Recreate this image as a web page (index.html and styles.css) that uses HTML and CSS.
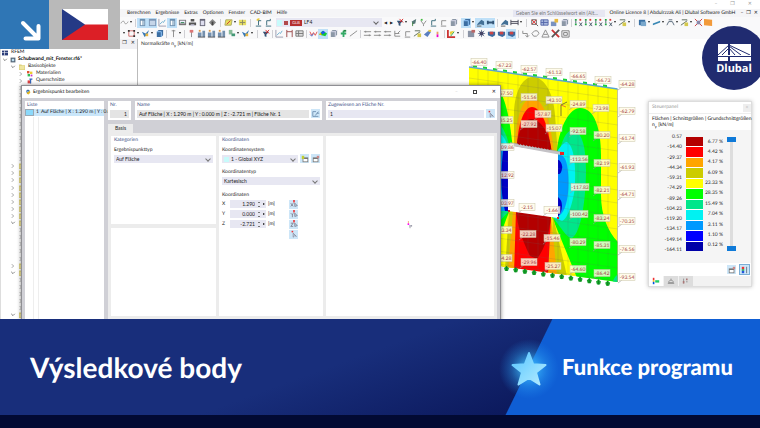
FILE: index.html
```html
<!DOCTYPE html>
<html lang="de">
<head>
<meta charset="utf-8">
<title>Výsledkové body</title>
<link rel="stylesheet" href="styles.css">
</head>
<body>
<main class="stage">
  <div class="app">
    <div class="app-title"><span>–</span><span>❐</span><span>✕</span></div>
    <nav class="menubar">
      <a href="#">Berechnen</a><a href="#">Ergebnisse</a><a href="#">Extras</a><a href="#">Optionen</a><a href="#">Fenster</a><a href="#">CAD-BIM</a><a href="#">Hilfe</a>
      <input class="search" type="text" aria-label="Suche" placeholder="Geben Sie ein Schlüsselwort ein (Alt...">
      <span class="licence">Online Licence 8 | Abdulrzzak Ali | Dlubal Software GmbH</span>
      <span class="mdi"><span>–</span><span>❐</span><span>✕</span></span>
    </nav>
    <div class="toolbar" id="bar-top"></div>
    <div class="toolbar" id="bar-bottom"></div>
    <div class="workspace">
      <aside class="sidebar">
        <div class="sidebar-head"><span>❐</span><span>✕</span></div>
        <ul class="tree" id="tree"></ul>
      </aside>
      <section class="viewport">
        <p>Normalkräfte n<sub>y</sub> [kN/m]</p>
        <svg class="model" id="model" viewBox="465 50 185 245"></svg>
      </section>
    </div>
  </div>

  <form class="dialog">
    <header class="dialog-title">
      <svg class="ico" viewBox="0 0 10 10"><path d="M2 3 5 1l3 2-1 3-4 1z" fill="#2d5f9e"/><path d="M4 5 8 3l1 3-3 3-3-1z" fill="#e3b722"/><path d="M3 3h3v2H3z" fill="#7db5dd"/></svg>
      <span>Ergebnispunkt bearbeiten</span>
      <span class="window-keys"><i class="faint">–</i><i class="square"></i><i>✕</i></span>
    </header>
    <div class="dialog-body">
      <section class="panel list">
        <h2>Liste</h2>
        <div class="list-row compact"><i class="swatch"></i><span>1</span><span>Auf Fläche | X : 1.290 m | Y : 0.00</span></div>
        <div class="list-lines"></div>
      </section>
      <div class="detail">
        <div class="heads">
          <section class="panel"><h2><label for="nr">Nr.</label></h2><input class="locked num" id="nr" value="1" readonly></section>
          <section class="panel"><h2><label for="name">Name</label></h2>
            <div class="line"><input class="locked compact" id="name" value="Auf Fläche | X : 1.290 m | Y : 0.000 m | Z : -2.721 m | Fläche Nr. 1" readonly><button type="button" class="key" data-icon="edit" aria-label="Name bearbeiten"></button></div></section>
          <section class="panel"><h2><label for="surface">Zugewiesen an Fläche Nr.</label></h2>
            <div class="line"><input id="surface" value="1"><button type="button" class="key" data-icon="pick" aria-label="Fläche wählen"></button></div></section>
        </div>
        <div class="tabs"><button type="button" class="tab">Basis</button></div>
        <div class="page">
          <div class="stack">
            <section class="card">
              <h2>Kategorien</h2>
              <label for="kind">Ergebnispunkttyp</label>
              <span class="pickbox"><select id="kind"><option>Auf Fläche</option></select></span>
            </section>
            <section class="card"></section>
          </div>
          <section class="card">
            <h2>Koordinaten</h2>
            <label for="system">Koordinatensystem</label>
            <div class="line"><span class="pickbox tinted"><select id="system"><option>1 - Global XYZ</option></select></span><button type="button" class="key" data-icon="fresh" aria-label="Neu"></button><button type="button" class="key" data-icon="props" aria-label="Bearbeiten"></button></div>
            <label for="ctype">Koordinatentyp</label>
            <span class="pickbox"><select id="ctype"><option>Kartesisch</option></select></span>
            <h3>Koordinaten</h3>
            <div class="coord"><label for="cx">X</label><span class="spin"><input class="num" id="cx" value="1.290"><i class="updown"></i><i class="next"></i></span><span>[m]</span><button type="button" class="key" data-icon="pickx" aria-label="X wählen"></button></div>
            <div class="coord"><label for="cy">Y</label><span class="spin"><input class="num" id="cy" value="0.000"><i class="updown"></i><i class="next"></i></span><span>[m]</span><button type="button" class="key" data-icon="picky" aria-label="Y wählen"></button></div>
            <div class="coord"><label for="cz">Z</label><span class="spin"><input class="num" id="cz" value="-2.721"><i class="updown"></i><i class="next"></i></span><span>[m]</span><button type="button" class="key" data-icon="pickz" aria-label="Z wählen"></button></div>
            <div class="coord"><button type="button" class="key" data-icon="pick" aria-label="Punkt wählen"></button></div>
          </section>
          <section class="card preview">
            <svg class="marker" viewBox="0 0 10 10"><path d="M3 0v4" stroke="#f3a06a"/><path d="M2 3h2v2H2z" fill="#f0f"/><path d="M4 6h3M5 6v3M7 5v2" stroke="#889" stroke-width="1" fill="none"/></svg>
          </section>
        </div>
      </div>
    </div>
  </form>

  <aside class="control">
    <header><span>Steuerpanel</span><button type="button" aria-label="Schließen">×</button></header>
    <p class="compact">Flächen | Schnittgrößen | Grundschnittgrößen<br>n<sub>y</sub> [kN/m]</p>
    <div class="scale">
      <ol class="bounds"><li>0.57</li><li>-14.40</li><li>-29.37</li><li>-44.34</li><li>-59.31</li><li>-74.29</li><li>-89.26</li><li>-104.23</li><li>-119.20</li><li>-134.17</li><li>-149.14</li><li>-164.11</li></ol>
      <div class="bands"><i class="b1"></i><i class="b2"></i><i class="b3"></i><i class="b4"></i><i class="b5"></i><i class="b6"></i><i class="b7"></i><i class="b8"></i><i class="b9"></i><i class="b10"></i><i class="b11"></i></div>
      <ol class="shares"><li>6.77 %</li><li>4.42 %</li><li>4.17 %</li><li>6.09 %</li><li>23.33 %</li><li>28.35 %</li><li>15.49 %</li><li>7.04 %</li><li>3.11 %</li><li>1.10 %</li><li>0.12 %</li></ol>
      <div class="range"><input type="range" min="0" max="100" value="100" aria-label="Obergrenze"><input type="range" min="0" max="100" value="0" aria-label="Untergrenze"></div>
    </div>
    <div class="control-keys"><button type="button" class="key" data-icon="props" aria-label="Optionen"></button><button type="button" class="key framed" data-icon="legend" aria-label="Legende"></button></div>
    <div class="control-tabs"><button type="button" class="on" data-icon="bands" aria-label="Farbskala"></button><button type="button" data-icon="weight" aria-label="Faktoren"></button><button type="button" data-icon="nodes" aria-label="Filter"></button></div>
  </aside>

  <div class="corner">
    <div class="corner-arrow"><svg viewBox="0 0 49 49"><path d="M23 23 38 38M38.500 26V38.500H25.500" fill="none" stroke="#fff" stroke-width="4" stroke-linecap="round" stroke-linejoin="round"/></svg></div>
    <div class="corner-flag"><svg viewBox="0 0 46 31"><path d="M0 0h46v16H0z" fill="#fff"/><path d="M0 15.500h46V31H0z" fill="#dc1f26"/><path d="M0 0 23 15.500 0 31z" fill="#253a86"/></svg></div>
  </div>

  <div class="logo">
    <svg viewBox="0 0 33 17"><path d="M0 0h33v12H0zM0 13h33v4H0z" fill="#fff"/><path d="M0 11 11 1 32 11M4 11 11 4M11 2 23 11M11 4 17 11" fill="none" stroke="#202b70" stroke-width="1"/><path d="M10 0h2v17h-2z" fill="#202b70"/><path d="M0 11h33v1H0z" fill="#fff"/></svg>
    <strong>Dlubal</strong>
  </div>
</main>

<section class="banner">
  <h1>Výsledkové body</h1>
  <div class="feature">
    <svg class="star" viewBox="0 0 60 60">
      <defs>
        <radialGradient id="glow"><stop offset=".2" stop-color="#3fc0ff" stop-opacity=".8"/><stop offset=".6" stop-color="#2fa6f5" stop-opacity=".35"/><stop offset="1" stop-color="#1f8df0" stop-opacity="0"/></radialGradient>
        <linearGradient id="ice" x1="0" y1="0" x2="1" y2="1"><stop offset="0" stop-color="#58c4ff"/><stop offset=".5" stop-color="#86d9ff"/><stop offset="1" stop-color="#b4ebff"/></linearGradient>
      </defs>
      <circle cx="30" cy="30" r="30" fill="url(#glow)"/>
      <path d="M30 14l4.200 11.300L46.500 26 37 33.500 40.500 45.500 30 38.800 19.500 45.500 23 33.500 13.500 26l12.300-.7z" fill="url(#ice)" stroke="url(#ice)" stroke-width="2" stroke-linejoin="round"/>
    </svg>
    <strong>Funkce programu</strong>
  </div>
</section>
<footer class="base"></footer>
<script src="app.js"></script>
</body>
</html>
```

FILE: styles.css
```css
* { box-sizing: border-box; }

body {
  margin: 0;
  min-height: 100vh;
  display: grid;
  grid-template-rows: 1fr 96px 13px;
  font: 5px/7px Lato, "Open Sans", sans-serif;
  color: #222;
  text-rendering: geometricPrecision;
}

h1, h2, h3, p, ol, ul { margin: 0; padding: 0; list-style: none; }
button, input, select { font: inherit; color: inherit; margin: 0; padding: 0; border: 0; background: none; border-radius: 0; min-width: 0; }
a { color: inherit; text-decoration: none; }
i { font-style: normal; }
svg { display: block; }
sub { font-size: 4px; line-height: 1px; }
.compact { font-family: "Liberation Sans Narrow", Lato, sans-serif; color: #111; }

.stage { position: relative; overflow: hidden; background: #fff; }
.app { position: absolute; inset: 0; display: flex; flex-direction: column; }

.app-title { height: 9px; display: flex; justify-content: flex-end; gap: 13px; padding: 1px 8px 0 0; color: #999; }
.menubar { height: 8px; display: flex; align-items: center; gap: 5px; padding-left: 127px; padding-right: 2px; background: #f5f5f7; white-space: nowrap; }
.search { margin-left: auto; width: 92px; height: 7px; padding-left: 3px; background: #e7e7f2; }
.search::placeholder { color: #777; opacity: 1; }
.mdi { display: flex; gap: 3px; }

.toolbar { height: 11px; display: flex; align-items: center; padding-left: 119px; background: #f9f9fa; }
.tool { flex: none; width: 10px; height: 10px; display: grid; place-items: center; }
.tool svg { width: 9px; height: 9px; }
.tool.on { background: #bfe0f8; }
.drop { flex: none; width: 4px; display: grid; place-items: center; }
.drop::after { content: ""; border: 1px solid transparent; border-top: 2px solid #222; }
.sep { flex: none; width: 6px; height: 8px; background: linear-gradient(#d0d0d4, #d0d0d4) center / 1px 100% no-repeat; }
.sep.thin { width: 4px; }
.gap { flex: none; width: 3px; }
.loadcase { flex: none; width: 106px; height: 9px; display: flex; align-items: center; gap: 2px; padding-left: 1px; background: #e7e7f2; }
.loadcase .cyan { width: 5px; height: 6px; background: #c8fbfb; }
.loadcase .red { width: 4px; height: 4px; background: #b04a4a; }
.loadcase .code { width: 12px; height: 6px; font-size: 4px; line-height: 6px; text-align: center; color: #fff; background: #b5302f; }
.loadcase select { flex: 1; appearance: none; }
.chev::after { content: ""; display: block; width: 3px; height: 3px; margin: 0 4px 2px 0; border: solid #666; border-width: 0 1px 1px 0; transform: rotate(45deg); }
.step { flex: none; width: 6px; text-align: center; font-size: 4px; }

.workspace { flex: 1; min-height: 0; display: flex; }
.sidebar { flex: none; width: 138px; display: flex; flex-direction: column; border-left: 1px solid #ddd; border-right: 1px solid #bbb; }
.sidebar-head { height: 10px; display: flex; justify-content: flex-end; gap: 4px; padding: 1px 2px 0 0; background: #f0f0f4; }
.tree { flex: 1; min-height: 0; display: grid; grid-auto-rows: 1fr; white-space: nowrap; }
.tree li { display: flex; align-items: center; gap: 3px; min-height: 0; }
.tree svg { width: 6px; height: 6px; flex: none; }
.tree .d0 { padding-left: 1px; }
.tree .d1 { padding-left: 1px; }
.tree .d2 { padding-left: 9px; }
.tree .d3 { padding-left: 17px; }
.tree .d1 { gap: 2px; font-weight: 700; color: #000; }

.viewport { flex: 1; position: relative; padding: 2px 3px; }
.model { position: absolute; left: 327px; top: 11px; width: 185px; height: 245px; }
.model text { font-size: 5px; fill: #a33838; text-anchor: middle; }

.dialog { position: absolute; left: 21px; right: 259px; top: 85px; bottom: -12px; display: flex; flex-direction: column; border: 1px solid #8f8f94; background: #d0d0d6; box-shadow: 0 0 4px rgba(0, 0, 0, .45); }
.dialog-title { height: 12px; display: flex; align-items: center; gap: 2px; padding: 0 4px 0 3px; background: #fff; color: #111; }
.ico { width: 6px; height: 6px; }
.window-keys { margin-left: auto; display: flex; align-items: center; gap: 15px; }
.window-keys .faint { color: #ccc; }
.square { width: 4px; height: 4px; border: 1px solid #444; }
.dialog-body { flex: 1; min-height: 0; display: flex; gap: 4px; padding: 3px 3px 0; }
.panel, .card { background: #fff; min-width: 0; }
.panel h2, .card h2 { font-size: 5px; line-height: 7px; font-weight: 400; color: #3c4f86; }

.list { width: 79px; flex: none; display: flex; flex-direction: column; }
.list h2 { padding: 1px 2px 0; }
.list-row { height: 7px; display: flex; align-items: center; gap: 2px; background: #c9e6fa; white-space: nowrap; }
.list-row span { flex: none; }
.swatch { flex: none; width: 9px; height: 7px; background: #8bd9fb; border: 1px solid #9aa9b5; }
.list-lines { flex: 1; width: 6px; margin: 1px 0 0 8px; border: solid #eee; border-width: 0 1px; }

.detail { flex: 1; min-width: 0; display: flex; flex-direction: column; }
.heads { display: grid; grid-template-columns: 23px 187px 1fr; gap: 4px; }
.heads .panel { height: 19px; padding: 1px 2px; }
.heads input { width: 100%; height: 8px; margin-top: 1px; padding: 0 2px; background: #e7e7f2; }
.heads .locked { background: #e4e4e4; }
.num, .heads .num { text-align: right; }
.line { display: flex; align-items: center; gap: 2px; }
.line input, .line .pickbox { flex: 1; }
.key { flex: none; width: 9px; height: 9px; display: grid; place-items: center; background: #cde6f8; }
.key svg { width: 8px; height: 8px; }
.framed { outline: 1px solid #7aaed6; }

.tabs { height: 13px; display: flex; align-items: flex-end; }
.tab { width: 25px; height: 9px; background: #ececec; }
.page { flex: 1; min-height: 0; display: grid; grid-template-columns: 105px 104px 1fr; gap: 3px; padding: 3px 3px 14px; background: #ececec; }
.stack { display: grid; grid-template-rows: 1fr 1fr; gap: 4px; }
.card { padding: 1px 3px; display: flex; flex-direction: column; }
.card > label { margin-top: 3px; }
.card h3 { font-size: 5px; line-height: 7px; font-weight: 400; margin: 7px 0 0; }
.card .line + label { margin-top: 6px; }
.pickbox { display: block; position: relative; height: 8px; margin-top: 1px; background: #e7e7f2; }
.pickbox::after { content: ""; position: absolute; right: 3px; top: 2px; width: 3px; height: 3px; border: solid #777; border-width: 0 1px 1px 0; transform: rotate(45deg); }
.pickbox select { display: block; width: 100%; height: 8px; padding-left: 2px; appearance: none; }
.tinted::before { content: ""; position: absolute; left: 2px; top: 2px; width: 5px; height: 5px; background: #c8fbfb; }
.tinted select { padding-left: 9px; }
.coord { display: flex; align-items: center; height: 10px; gap: 2px; }
.coord label { width: 6px; }
.spin { width: 36px; height: 8px; display: flex; align-items: center; gap: 3px; background: #e7e7f2; }
.spin input { width: 25px; height: 8px; }
.updown { width: 2px; height: 5px; border: solid #777; border-width: 1px 0; }
.next { border: 1px solid transparent; border-left: 2px solid #111; border-right: 0; }
.coord .key { margin-left: auto; margin-right: 22px; }
.preview { display: grid; place-items: center; padding-bottom: 4px; }
.marker { width: 8px; height: 8px; }

.control { position: absolute; right: 8px; top: 101px; width: 104px; display: flex; flex-direction: column; background: #fff; border: 1px solid #ddd; box-shadow: 0 0 4px rgba(0, 0, 0, .25); }
.control header { height: 11px; display: flex; align-items: center; justify-content: space-between; padding-left: 3px; color: #999; }
.control header button { width: 8px; height: 8px; line-height: 7px; background: #eee; color: #bbb; }
.control p { height: 17px; padding: 2px 3px 0; line-height: 6px; white-space: nowrap; border-top: 1px solid #eee; }
.scale { height: 133px; display: flex; padding: 7px 15px 12px 0; background: #f5f5f5; text-align: right; }
.bounds { width: 33px; display: flex; flex-direction: column; justify-content: space-between; margin: -3px 0; }
.bounds li, .shares li { line-height: 7px; }
.bands { width: 17px; margin-left: 4px; display: grid; gap: 1px; background: #fff; }
.shares { width: 20px; display: grid; align-items: center; }
.range { margin-left: auto; width: 10px; display: flex; flex-direction: column; background: linear-gradient(#ddd, #ddd) center / 3px 100% no-repeat; }
.range input { flex: 1; min-height: 0; width: 10px; writing-mode: vertical-lr; direction: rtl; appearance: none; }
.range input::-webkit-slider-thumb { appearance: none; width: 9px; height: 5px; background: #0f7ad8; }
.range input::-webkit-slider-runnable-track { background: none; }
.b1 { background: #b30000; }
.b2 { background: #f00; }
.b3 { background: #ffa500; }
.b4 { background: #cccc00; }
.b5 { background: #ff0; }
.b6 { background: #0f0; }
.b7 { background: #00e68a; }
.b8 { background: #00f2f2; }
.b9 { background: #0099ff; }
.b10 { background: #00f; }
.b11 { background: #0000a8; }
.control-keys { height: 13px; display: flex; justify-content: flex-end; align-items: center; gap: 4px; padding-right: 2px; }
.control-tabs { height: 10px; display: flex; background: #f2f2f2; }
.control-tabs button { width: 15px; display: grid; place-items: center; background: #ddd; border-right: 1px solid #f2f2f2; }
.control-tabs .on { background: #fff; }
.control-tabs svg { width: 8px; height: 8px; }

.corner { position: absolute; left: 0; top: 0; height: 49px; display: flex; }
.corner-arrow { width: 49px; background: #2f76b5; }
.corner-flag { width: 71px; display: grid; place-items: center; background: #b9b9b9; }
.corner-flag svg { width: 46px; height: 31px; }

.logo { position: absolute; right: -6px; top: 26px; width: 64px; height: 64px; display: flex; flex-direction: column; align-items: center; padding-top: 18px; border-radius: 50%; background: #202b70; color: #fff; }
.logo svg { width: 33px; height: 17px; }
.logo strong { font: 700 11px/15px "Open Sans", sans-serif; }

.banner { display: flex; justify-content: space-between; align-items: center; padding-left: 30px; background: linear-gradient(160deg, #182e7b 45%, #0a1658 80%, #0e1c62); color: #fff; }
.banner h1 { font: 700 28px/40px Lato, sans-serif; }
.feature { align-self: stretch; width: 256px; display: flex; align-items: center; background: linear-gradient(116deg, transparent 43px, #0f5ed4 44px); }
.star { width: 60px; height: 60px; margin: 4px 3px 0 -5px; flex: none; }
.feature strong { font: 900 22px/30px Lato, sans-serif; white-space: nowrap; }
.base { background: #020a33; }
```

FILE: app.js
```js
const line = (d, color, width = 1) => `<path d="${d}" fill="none" stroke="${color}" stroke-width="${width}"/>`;
const fill = (d, color) => `<path d="${d}" fill="${color}"/>`;

const icons = {
  undo: line("M1 6C2 3 5 3 5 5S8 7 9 4", "#999"),
  win: fill("M2 1h6v8H2z", "#6d8fae") + fill("M3 3h2v5H3z", "#fff") + fill("M6 3h1v5H6z", "#dbe9f4"),
  table: fill("M1 1h8v8H1z", "#7b95b5") + fill("M2 3h6v5H2z", "#c5d5e8"),
  graph: line("M1 1v8h8", "#99a") + line("M2 7l3-3 1 1 2-3", "#6ac"),
  calc: fill("M1 2h8v6H1z", "#777") + fill("M2 3h6v3H2z", "#eef") + line("M3 5h4", "#385"),
  print: fill("M1 5h8v3H1zM3 1h4v3H3z", "#555") + fill("M3 7h4v2H3z", "#ccd"),
  doc: fill("M2 1h6v8H2z", "#667") + fill("M3 3h4v5H3z", "#dde"),
  fan: fill("M5 1l4 4-4 4-4-4z", "#888") + fill("M4 4h2v4H4z", "#444"),
  hatch: fill("M2 2h7L8 8H1z", "#e8e05a") + line("M2 2h7L8 8H1z", "#aa6") + line("M3 7l4-4", "#c33"),
  plan: fill("M1 2h8v6H1z", "#e4dc62") + line("M2 5h6M5 2v6", "#886"),
  load: fill("M3 1l3-1v3H3z", "#e8c93c") + line("M2 9h6M5 8V3h3", "#367"),
  load2: line("M2 9h6M3 8V3h4V1", "#367"),
  filter: fill("M2 3h7L6 6v3L4 8V6z", "#357") + line("M5 1l4 4M9 1 5 5", "#d22"),
  leaf: fill("M3 4l5-3-1 5-3 1z", "#577") + line("M4 5v4", "#484"),
  tick: line("M2 3l3 4 3-4M5 7v2", "#888") + fill("M2 1h2v2H2z", "#4b4"),
  frame: line("M2 9h6M3 8V3h5", "#888"),
  cube: fill("M2 3l2-2h5v5L7 9H2z", "#8b97a6") + line("M2 3h5v6M7 3l2-2", "#dde"),
  bluecube: fill("M2 3l2-2h5v6L7 9H2z", "#3c6ea2") + line("M2 3h5v6", "#9cf"),
  beam: fill("M2 6l4-4 3 2v4L5 7 1 8z", "#447096") + line("M1 9h5", "#555"),
  dims: line("M1 5h8M2 3v4M8 3v4", "#357", 2),
  span: line("M1 2v6M9 2v6M1 4h8M1 6h8", "#445"),
  zoomx: line("M2 2h5v5H2zM7 7l2 2", "#555") + line("M2 2l5 5M7 2 2 7", "#d33"),
  box: fill("M1 2h8v6H1z", "#aab9dd") + line("M1 2h8v6H1zM4 2v6M1 5h8", "#56a"),
  ybox: fill("M1 4h6v5H1z", "#7a92c0") + fill("M5 1h4v4H5z", "#e8b93c"),
  axes: fill("M1 1h2v2H1zM1 6h2v2H1z", "#2a4") + fill("M6 1h2v2H6z", "#d33") + line("M6 5l3 4M9 5 6 9M2 3v3", "#456"),
  slope: line("M1 8l7-5M2 2h6", "#565") + fill("M5 5h4v4H5z", "#d5c94d"),
  db: fill("M1 2h7v6H1z", "#3870a4") + fill("M3 4h6v5H3z", "#79a7cb"),
  bar: fill("M1 6l8-3v2L1 8z", "#3a88b5"),
  tri: line("M1 8l2-4h4l2 4M3 2h4", "#567"),
  redx: line("M1 1l8 8M9 1 1 9", "#c33") + fill("M3 3h4v4H3z", "#88a"),
  orange: fill("M0 1l9 1v7L0 8z", "#f29a3a"),
  square: line("M2 2h6v6H2z", "#c66") + fill("M1 1h2v2H1zM7 7h2v2H7zM7 1h2v2H7z", "#333"),
  bolt: fill("M1 3l4 2 4-4-2 5-3 3z", "#3578b8") + fill("M5 5h3v3H5z", "#e7b540"),
  pin: line("M5 1v8M3 2h4", "#888"),
  pinr: line("M5 3v6", "#888") + fill("M3 1h4v3H3z", "#d77"),
  build: fill("M1 4h4v5H1zM6 2h3v7H6z", "#7490ae") + fill("M2 1h2v2H2z", "#d94") + line("M1 9h8", "#555"),
  green: fill("M2 1h4v5H2z", "#8b9") + fill("M5 5h4v3H5z", "#497"),
  arch: line("M2 9V3h6v6M2 3V1M8 3V1", "#944"),
  grid: fill("M1 2h8v6H1z", "#ddd") + line("M1 2h8v6H1zM1 5h8M4 2v6", "#777"),
  vee: line("M1 3l2 4 2-3 2 3 2-4", "#d44") + line("M1 6l2 2 2-3", "#46c"),
  surf: fill("M0 6l4-4 5 3-2 3z", "#1c3") + fill("M2 4l3-2 2 2-3 2z", "#25e") + fill("M0 6l2-2 1 3z", "#fb0"),
  shaft: line("M5 2v7M2 5h6", "#3a6", 2) + fill("M5 1h3v2H5z", "#284"),
  diag: line("M1 8l8-6", "#888"),
  rule: line("M1 3h8M1 7h8M3 2v2M7 6v2", "#888"),
  ruler: line("M2 2v6h6M2 5h5M8 2 5 5", "#888"),
  pen: fill("M1 6l5-4 3 1-4 6z", "#5a7ec0") + fill("M6 1h3v2H6z", "#ec3"),
  mag: line("M5 3v3", "#e8a060", 2) + fill("M4 6h2v3H4z", "#e0c"),
  color: line("M1 1v8h8", "#c33", 2) + fill("M3 3l5-1-4 5z", "#ec3") + line("M4 8l4-5", "#2a4"),
  note: fill("M1 2h7v7H1z", "#8a93a5") + fill("M5 1h4v3H5z", "#b66"),
  gear: line("M5 1v8M1 5h8M2 2l6 6M8 2 2 8", "#6d7d9d") + fill("M3 3h4v4H3z", "#446"),
  redblue: fill("M1 3h8v4l-3 2-5-2z", "#3c6ca0") + fill("M3 3h4v3H3z", "#c44"),
  turn: line("M2 2v3h5v4M5 7l2 2 2-2", "#888"),
  ring: line("M1 5l3-3h3l2 3-3 3H3z", "#888"),
  warn: line("M5 1l4 8H1zM3 6h4", "#888"),
  cross: line("M1 1l8 8", "#c33", 2) + line("M9 1 1 9", "#555", 2),
  cam: line("M1 2h8v7H1zM3 4h4v3H3z", "#777"),
  edit: line("M1 2h4M1 2v6h7M4 7l4-5M6 4h3", "#68a"),
  pick: line("M4 4v5l2-2 2 1z", "#889") + fill("M2 1h2v2H2z", "#e33"),
  pickx: line("M1 4l3 4M4 4 1 8M6 4v4l3-1z", "#778") + fill("M4 0h2v3H4z", "#e33"),
  picky: line("M1 4l2 2 1-2M3 6v3M6 4v4l3-1z", "#778") + fill("M4 0h2v3H4z", "#e33"),
  pickz: line("M1 4h3L1 8h3M6 4v4l3-1z", "#778") + fill("M4 0h2v3H4z", "#e33"),
  fresh: fill("M2 3h7v6H2z", "#777") + fill("M3 5h5v3H3z", "#fff") + fill("M1 1h3v4H1z", "#c2cf30"),
  props: fill("M1 3h7v6H1z", "#777") + fill("M2 5h5v3H2z", "#fff") + fill("M6 1h3v3H6z", "#c88"),
  legend: fill("M1 1h3v3H1z", "#e33") + fill("M1 4h3v2H1z", "#2b4") + fill("M1 6h3v3H1z", "#25d") + line("M7 1v8", "#567"),
  bands: fill("M1 1h2v3H1z", "#e33") + fill("M1 4h2v2H1z", "#fb0") + fill("M1 6h2v3H1z", "#05d") + fill("M4 4h5v3H4z", "#2c6"),
  weight: line("M1 8h8M2 7c0-4 6-4 6 0zM5 2v2", "#888"),
  nodes: line("M2 2v6M5 6h2", "#888") + fill("M1 5h2v3H1zM5 2h2v2H5z", "#a77"),
  flag: fill("M0 1h10v8H0z", "#2b3d7a") + fill("M4 1h1v8H4zM0 4h10v1H0z", "#fff"),
  model: fill("M1 1h8v8H1z", "#567") + fill("M3 3h4v4H3z", "#bde"),
  folder: fill("M0 1h4l1 1h5v8H0z", "#dccf7a") + fill("M1 3h8v6H1z", "#efe6a0"),
  mat: fill("M0 0h4v4H0z", "#d53") + fill("M5 1h4v4H5z", "#ec3") + fill("M1 5h4v4H1z", "#3b5") + fill("M6 6h3v3H6z", "#c3c"),
  sect: fill("M1 4h5v5H1z", "#d44") + fill("M4 1h5v2H7v6H5V3H4z", "#36b"),
  closed: line("M3 2l3 3-3 3", "#666"),
  open: line("M2 3l3 3 3-3", "#333")
};
const svg = name => `<svg viewBox="0 0 10 10">${icons[name] || ""}</svg>`;

// Toolbar tokens: "-" separator, "~" thin separator, "_" gap, "v" drop-down mark, "*" active tool.
const loadcase = `<label class="loadcase chev"><i class="cyan"></i><i class="red"></i><span class="code">GLB</span><select aria-label="Lastfall"><option>LF4</option></select></label><button class="step">◀</button><button class="step">▶</button>`;
const marks = { "-": '<i class="sep"></i>', "~": '<i class="sep thin"></i>', "_": '<i class="gap"></i>', v: '<i class="drop"></i>', L: loadcase };
const bar = (id, tokens) => {
  document.getElementById(id).innerHTML = tokens.split(" ").map(t => marks[t] ||
    `<button class="tool${t[0] === "*" ? " on" : ""}" aria-label="${t.replace("*", "")}">${svg(t.replace("*", ""))}</button>`).join("");
};
bar("bar-top", "undo v ~ *win *table graph *win calc print doc fan - hatch v plan - load load2 _ L filter v leaf tick load2 frame cube _ *bluecube v *beam *dims ~ beam span v - zoomx box ybox cube ~ axes axes axes axes v slope v - db v bar v tri v slope v redx orange");
bar("bar-bottom", "_ v square v bolt v bluecube ~ pin v ~ pinr build build build green v bolt v - filter ~ graph arch grid ~ vee *surf cube shaft diag ~ rule rule rule ruler frame slope pen mag ~ color v - note gear redblue redblue *redblue ~ turn ring warn cross cam");

document.querySelectorAll("[data-icon]").forEach(b => { b.innerHTML = svg(b.dataset.icon); });

// Navigator rows: depth, twist, icon, caption.
const rows = [
  ["d0", "", "flag", "RFEM"], ["d1", "open", "model", "Schubwand_mit_Fenster.rf6*"],
  ["d2", "open", "folder", "Basisobjekte"], ["d3", "closed", "mat", "Materialien"], ["d3", "closed", "sect", "Querschnitte"],
  ...Array(11).fill(["d3", "closed", "", ""]),
  ...Array(8).fill(["d2", "closed", "folder", ""]), ["d2", "open", "folder", ""],
  ...Array(5).fill(["d3", "closed", "", ""]),
  ["d2", "closed", "folder", ""], ["d2", "open", "folder", ""],
  ...Array(5).fill(["d3", "closed", "", ""]), ["d2", "open", "folder", ""]
];
document.getElementById("tree").innerHTML = rows.map(([depth, twist, icon, text]) =>
  `<li class="${depth}">${twist ? svg(twist) : ""}${icon ? svg(icon) : ""}<span>${text}</span></li>`).join("");

// Wall with window opening: contour bands, mesh lines, supports and values.
const outline = "M469 67 617.500 89V282L469 262z";
let art = `<defs><clipPath id="wall"><path d="${outline}"/></clipPath></defs><g clip-path="url(#wall)">` +
  fill(outline, "#ff0") +
  fill("M514 150V115C514 95 521 77 533 77S554 95 555 115L558 155z", "#cc0") +
  fill("M515 150C515 120 522 98 532 98S551 118 554 155z", "#ffa500") +
  fill("M517 150C517 125 524 107 532 107S550 125 551 155z", "#f00") +
  fill("M516 150C518 130 524 119 531 119S550 128 552 155z", "#b30000") +
  fill("M557 150C560 125 570 108 580 108 595 108 601 130 601 155V195C601 215 608 232 618 242V290H582L552 217z", "#0f0") +
  fill("M557 160C562 140 566 130 573 130 583 132 586 150 586 170 586 195 582 232 572 238 566 238 560 225 552 217z", "#00e68a") +
  fill("M558 150C562 145 564 142 567 142 574 146 576 165 575 185 574 200 568 219 562 221L552 217z", "#00f2f2") +
  fill("M556 157C560 153 565 155 567 165 570 180 569 208 560 215L556 217z", "#0099ff") +
  fill("M556 160h3q4 4 3 9t-3 5h-3zM556 197h2q4 3 4 9t-4 11h-2z", "#0000c8") +
  fill("M490 90H499C506 100 510 120 513 150H490z", "#0f0") +
  fill("M490 115C500 120 508 135 510 150H490z", "#00e68a") +
  fill("M490 127C500 130 506 138 509 150H490z", "#00f2f2") +
  fill("M490 145h20v67H490z", "#0099ff") +
  fill("M503 151h6v60h-4c-5-20-4-40-2-60z", "#0000c8") +
  fill("M490 212h19L501 233H490z", "#0f0") + fill("M490 211h19L499 222z", "#00e68a") +
  fill("M509 211h8L515 270H502z", "#cc0") + fill("M513 211h5L516 270H508z", "#ffa500") +
  fill("M500 240 509 213 505 268H498z", "#ff0") +
  fill("M553 216 567 276H550z", "#cc0") + fill("M551 216 557 275H546z", "#ffa500") +
  fill("M516 211 551 217 548 274H514z", "#f00") + fill("M516 211 551 217C549 235 545 248 537 259L530 256C522 240 518 228 516 211z", "#b30000") +
  fill("M615 277 618 274V283H612z", "#00e68a");
for (let x = 478; x < 617; x += 10) art += line(`M${x} 60V290`, "#66666655", .5);
for (let y = 78; y < 285; y += 13) art += line(`M469 ${y}L618 ${y + 21}`, "#66666655", .5);
art += "</g>" + fill("M508 145 558 153V218L508 211z", "#fff") +
  line("M469 67 617.500 89", "#5aa7cf", 1.500) + line("M617.500 89V282", "#8b8b66", .5) +
  line("M510 144 562 153.500", "#c4c2c6", 3) + line("M510 142.500 562 152", "#999", .5) +
  fill("M560 152h4v3h-4zM508 210h2v2h-2zM557 217h2v2h-2z", "#e22") +
  line("M561 116V105l6-3", "#444", .7) + line("M561 105l5 2", "#d44", .7);
for (let i = 0; i < 11; i++) art += fill(`M${518 + i * 3} ${142 + i * .5}l2 .5v2.500l-2-1z`, "#b30000");
for (let i = 0; i < 14; i++) art += fill(`M${473 + i * 10} ${65 + i * 1.5}l4 .6v2l-4-.6z`, "#1ad13a");
for (let i = 0; i < 12; i++) {
  const x = 506.5 + i * 9.2, y = 266 + i * 1.35;
  art += fill(`M${x} ${y}l2.500 2-1 3h-3l-1-3z`, "#17a52c") + line(`M${x} ${y}v5`, "#0b7a1c", .8);
}
const values = [
  [479, 62, "-66.40"], [504, 65, "-67.23"], [529, 69, "-62.57"], [554, 72, "-61.13"], [578, 76, "-66.65"], [603, 80, "-66.73"], [627, 84, "-64.28"],
  [505, 93, "-57.50"], [529, 97, "-51.56"], [554, 100, "-43.10"], [578, 104, "-24.89"], [601, 108, "-73.98"], [627, 111, "-62.79"],
  [505, 120, "-85.25"], [543, 114, "-57.87"], [529, 124, "-27.92"], [554, 128, "-15.07"], [578, 131, "-92.58"], [602, 135, "-80.20"], [627, 138, "-61.74"],
  [505, 147, "-109.86"], [579, 159, "-113.56"], [602, 163, "-82.19"], [627, 167, "-61.93"],
  [505, 175, "-112.92"], [580, 187, "-117.83"], [602, 190, "-82.21"], [627, 194, "-64.71"],
  [505, 203, "-103.97"], [527, 207, "-2.15"], [552, 210, "-1.66"], [579, 214, "-100.42"], [602, 218, "-83.24"], [627, 221, "-70.35"],
  [504, 230, "-83.34"], [528, 234, "-22.28"], [552, 238, "-15.46"], [578, 242, "-80.29"], [602, 245, "-85.31"], [627, 249, "-76.56"],
  [504, 258, "-64.28"], [529, 262, "-29.96"], [553, 266, "-25.27"], [578, 269, "-64.60"], [602, 273, "-86.42"], [627, 277, "-93.54"]
];
art += values.map(([x, y, v]) => {
  const w = v.length > 6 ? 18 : 16;
  return line(`M${x - w / 2 + 3} ${y + 3}l-4 3`, "#999", .6) +
    `<rect x="${x - w / 2}" y="${y - 3.5}" width="${w}" height="7" fill="#fffbe8" fill-opacity=".82" stroke="#c9c5a8" stroke-width=".5"/><text x="${x}" y="${y + 2}">${v}</text>`;
}).join("");
document.getElementById("model").innerHTML = art;
```
